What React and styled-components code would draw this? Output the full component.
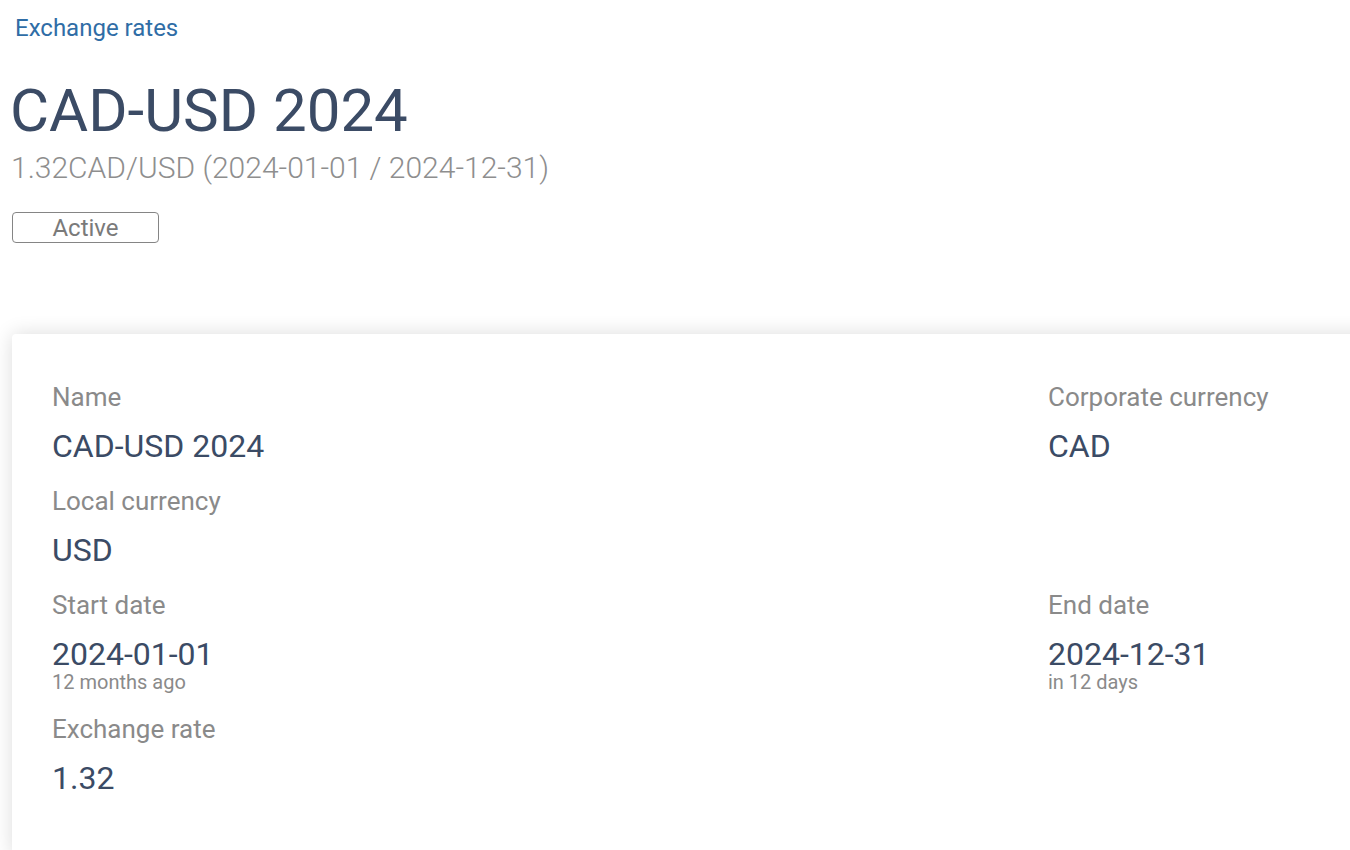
import React from 'react';
import styled, { createGlobalStyle } from 'styled-components';

const GlobalStyle = createGlobalStyle`
    html, body {
        margin: 0;
        padding: 0;
        background: #ffffff;
        overflow: hidden;
    }
    body {
        font-family: Roboto, "Liberation Sans", Arial, sans-serif;
    }
`

const Page = styled.div`
    padding: 14px 0 0 12px;
    display: flex;
    flex-direction: column;
    align-items: flex-start;
`
const Breadcrumb = styled.a`
    font-size: 24px;
    line-height: 28px;
    color: #2f6da6;
    text-decoration: none;
    margin-left: 3px;
    cursor: pointer;
`
const Title = styled.h1`
    margin: 34px 0 0 -2px;
    font-size: 60px;
    line-height: 70px;
    font-weight: 400;
    color: #3b4b65;
`
const Subtitle = styled.div`
    margin: 4px 0 0 -1px;
    font-size: 30px;
    line-height: 35px;
    font-weight: 300;
    color: #8e8e8e;
`
const Badge = styled.span`
    margin-top: 27px;
    box-sizing: border-box;
    width: 147px;
    height: 31px;
    border: 1.5px solid #858585;
    border-radius: 4px;
    display: flex;
    align-items: center;
    justify-content: center;
    font-size: 24px;
    color: #7a7a7a;
`
const Card = styled.section`
    margin-top: 91px;
    width: 1500px;
    box-sizing: border-box;
    padding: 48px 40px 60px;
    background: #ffffff;
    border-radius: 4px;
    box-shadow: 0 0 20px rgba(0, 0, 0, 0.14);
    display: grid;
    grid-template-columns: 996px 1fr;
    row-gap: 22px;
`
const Field = styled.div`
    display: flex;
    flex-direction: column;
`
const Label = styled.div`
    font-size: 26px;
    line-height: 30px;
    color: #8a8a8a;
    margin-bottom: 16px;
`
const Value = styled.div`
    font-size: 32px;
    line-height: 36px;
    color: #3b4b65;
`
const Note = styled.div`
    font-size: 20px;
    line-height: 20px;
    color: #8a8a8a;
`

const fields = [
    { label: "Name", value: "CAD-USD 2024" },
    { label: "Corporate currency", value: "CAD" },
    { label: "Local currency", value: "USD" },
    null,
    { label: "Start date", value: "2024-01-01", note: "12 months ago" },
    { label: "End date", value: "2024-12-31", note: "in 12 days" },
    { label: "Exchange rate", value: "1.32" },
    null,
];

const App = () => {
    return (
        <>
        <GlobalStyle />
        <Page>
            <Breadcrumb>Exchange rates</Breadcrumb>
            <Title>CAD-USD 2024</Title>
            <Subtitle>1.32CAD/USD (2024-01-01 / 2024-12-31)</Subtitle>
            <Badge>Active</Badge>
            <Card>
                {fields.map((field, index) => (
                    field ? (
                        <Field key={index}>
                            <Label>{field.label}</Label>
                            <Value>{field.value}</Value>
                            {field.note && <Note>{field.note}</Note>}
                        </Field>
                    ) : <div key={index} />
                ))}
            </Card>
        </Page>
        </>
    )
}

export default App;
